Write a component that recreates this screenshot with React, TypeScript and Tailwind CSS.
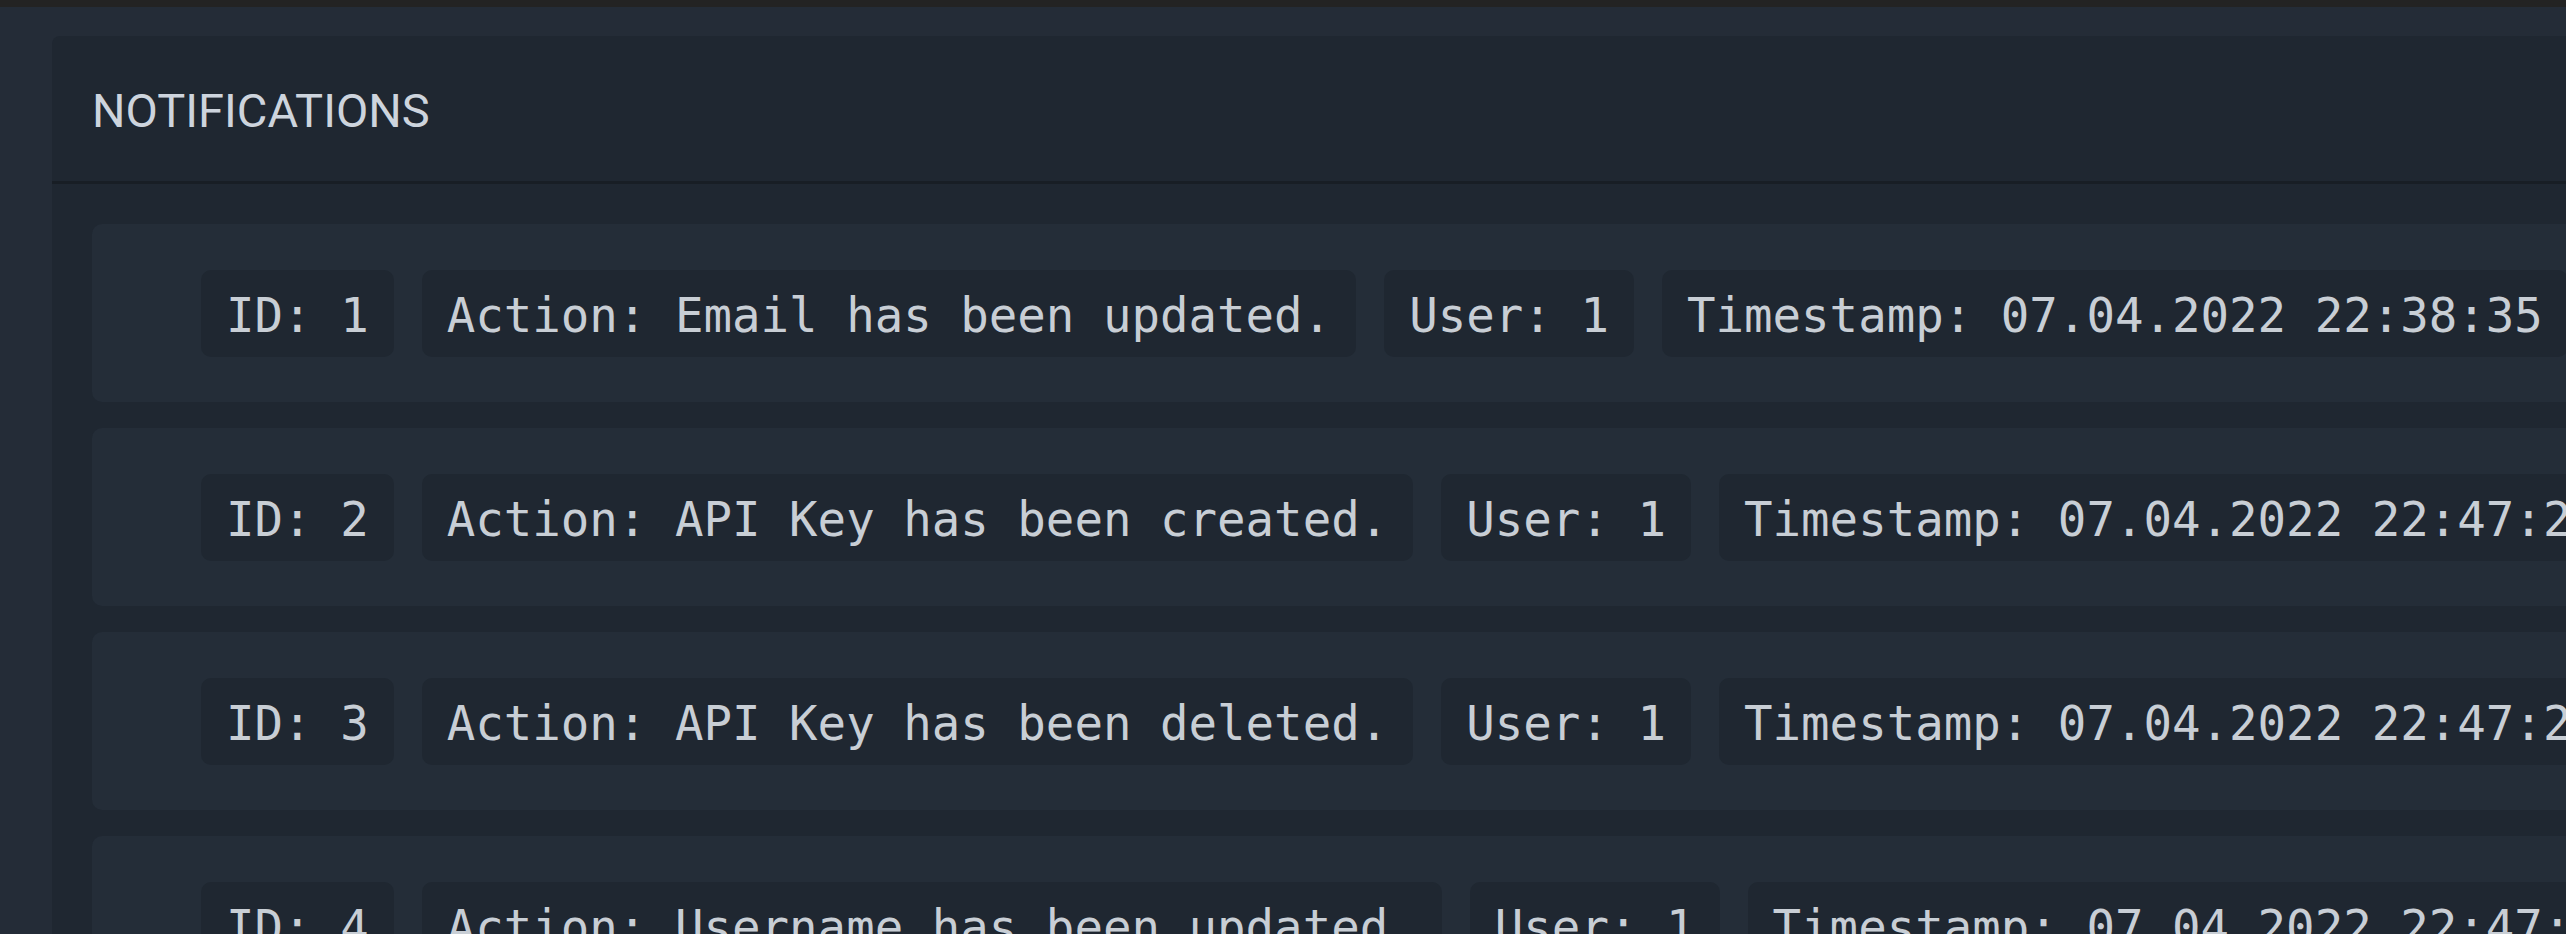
import React from "react";

type Row = { id: number; action: string; user: number; ts: string };

const rows: Row[] = [
  { id: 1, action: "Email has been updated.", user: 1, ts: "07.04.2022 22:38:35" },
  { id: 2, action: "API Key has been created.", user: 1, ts: "07.04.2022 22:47:21" },
  { id: 3, action: "API Key has been deleted.", user: 1, ts: "07.04.2022 22:47:26" },
  { id: 4, action: "Username has been updated.", user: 1, ts: "07.04.2022 22:47:58" },
];

function Chip({ children }: { children: React.ReactNode }) {
  return (
    <div className="flex h-[87px] shrink-0 items-center whitespace-nowrap rounded-[10px] bg-[#1f2731] px-[25px] pt-[6px] font-['DejaVu_Sans_Mono','Liberation_Mono',monospace] text-[47.4px] leading-none text-[#c8ced5]">
      {children}
    </div>
  );
}

export default function App() {
  return (
    <div className="flex h-[934px] w-[2566px] flex-col overflow-hidden bg-[#242c37]">
      <div className="h-[7px] shrink-0 bg-[#232323]" />
      <div className="pl-[52px] pt-[29px]">
        <div className="w-[2800px] rounded-t-[8px] bg-[#1f2731]">
          <div className="flex h-[148px] items-center border-b-[3px] border-[#181e25] pl-[40px] pt-[3px]">
            <span className="font-['Roboto','Inter',sans-serif] text-[47px] leading-none text-[#cdd4dd]">
              NOTIFICATIONS
            </span>
          </div>
          <div className="flex flex-col gap-[26px] px-[40px] pt-[40px]">
            {rows.map((r) => (
              <div
                key={r.id}
                className="flex h-[178px] items-center gap-[28px] rounded-[10px] bg-[#242d38] pl-[109px]"
              >
                <Chip>ID: {r.id}</Chip>
                <Chip>Action: {r.action}</Chip>
                <Chip>User: {r.user}</Chip>
                <Chip>Timestamp: {r.ts}</Chip>
              </div>
            ))}
          </div>
        </div>
      </div>
    </div>
  );
}
